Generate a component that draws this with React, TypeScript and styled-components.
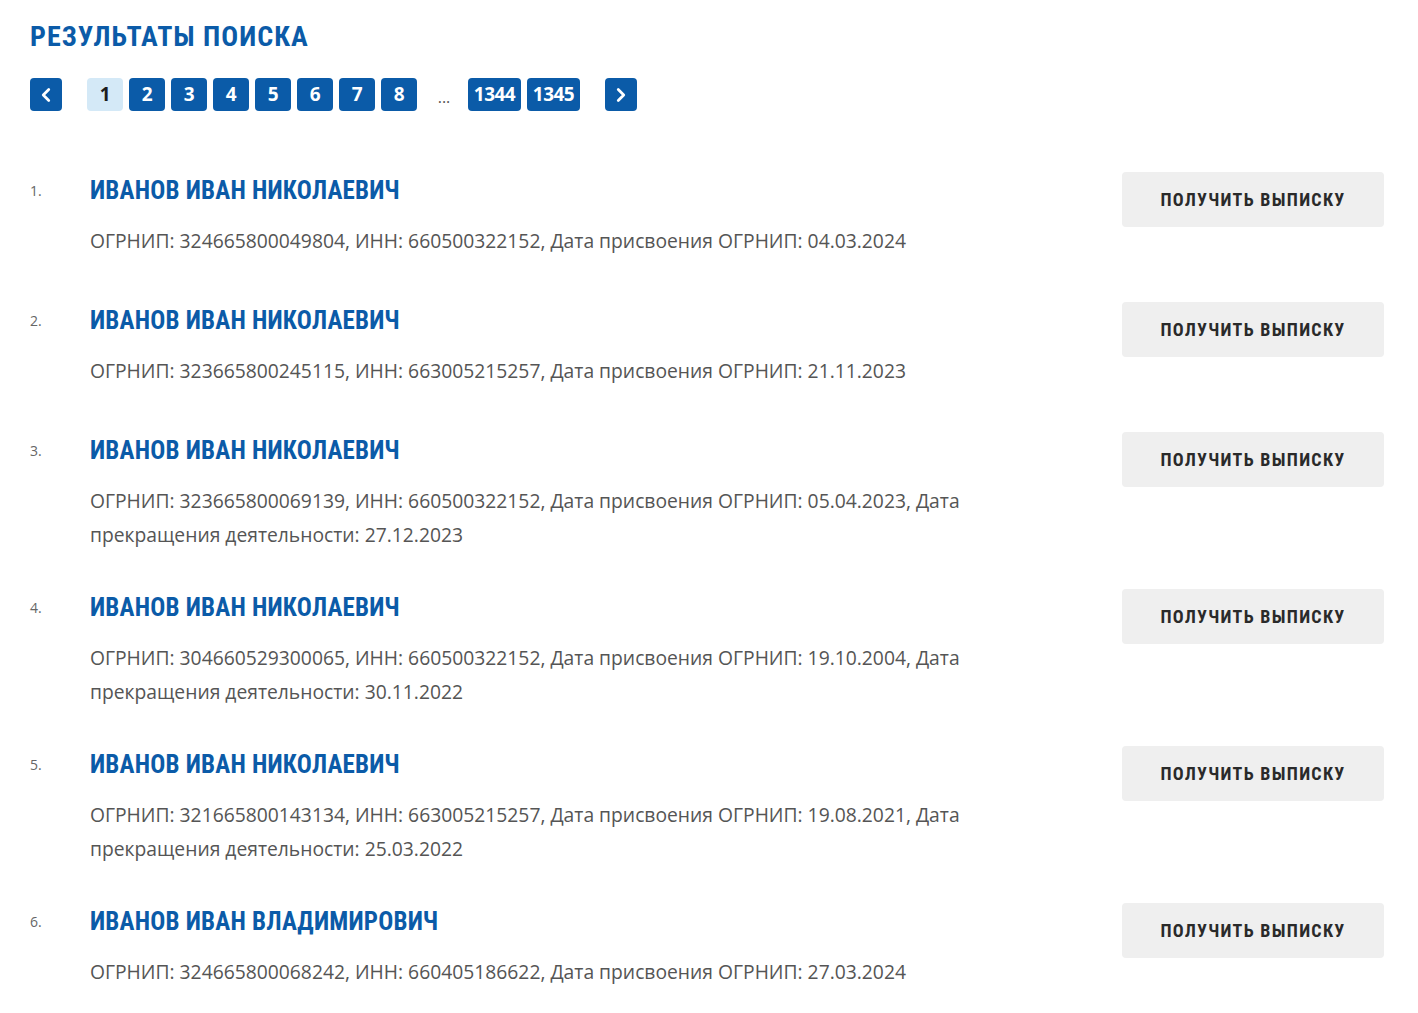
import React from "react";
import styled, { createGlobalStyle } from "styled-components";
import { ChevronLeft, ChevronRight } from "lucide-react";

const Global = createGlobalStyle`
  html, body { margin: 0; padding: 0; background: #fff; }
  body { font-family: "Open Sans", "Noto Sans", sans-serif; }
`;

const BLUE = "#0b5ba8";
const COND = `"Roboto Condensed", "Roboto", sans-serif`;

const Page = styled.div`
  padding: 21px 34px 20px 30px;
`;

const Title = styled.h1`
  margin: 0 0 25px;
  font-family: ${COND};
  font-weight: 700;
  font-size: 28px;
  line-height: 32px;
  color: ${BLUE};
  letter-spacing: 1px;
`;

const Pager = styled.nav`
  display: flex;
  align-items: center;
  gap: 6px;
  margin-bottom: 61px;
`;

const PageBtn = styled.button<{ $active?: boolean; $arrow?: boolean; $wide?: boolean }>`
  box-sizing: border-box;
  display: inline-flex;
  align-items: center;
  justify-content: center;
  height: 33px;
  min-width: ${(p) => (p.$arrow ? "32px" : p.$wide ? "53px" : "36px")};
  padding: 0 0 2px;
  border: none;
  border-radius: 4px;
  background: ${(p) => (p.$active ? "#d4e9f7" : BLUE)};
  color: ${(p) => (p.$active ? "#1d1d1d" : "#fff")};
  font-family: "Open Sans", sans-serif;
  font-weight: 700;
  font-size: 19px;
  letter-spacing: -0.5px;
  cursor: pointer;
`;

const PrevBtn = styled(PageBtn)`
  margin-right: 19px;
  padding: 0;
`;

const NextBtn = styled(PageBtn)`
  margin-left: 19px;
  padding: 0;
`;

const Dots = styled.span`
  width: 36px;
  padding-top: 4px;
  text-align: center;
  color: #555;
  font-size: 16px;
  font-family: "Open Sans", sans-serif;
  margin-left: 3px;
`;

const List = styled.ol`
  list-style: none;
  margin: 0;
  padding: 0;
`;

const Row = styled.li`
  display: flex;
  align-items: flex-start;
  margin-bottom: 37px;
`;

const Num = styled.span`
  width: 60px;
  flex: none;
  margin-top: 4px;
  line-height: 30px;
  font-size: 14px;
  color: #666;
  font-family: "Open Sans", sans-serif;
`;

const Content = styled.div`
  flex: 1;
  max-width: 920px;
  min-height: 93px;
  padding-top: 4px;
  box-sizing: border-box;
`;

const Name = styled.a`
  display: block;
  font-family: ${COND};
  font-weight: 700;
  font-size: 25px;
  line-height: 30px;
  color: ${BLUE};
  text-decoration: none;
  letter-spacing: 0.2px;
`;

const Info = styled.p`
  margin: 18px 0 0;
  font-size: 19.3px;
  line-height: 34px;
  color: #555;
`;

const GetBtn = styled.button`
  margin-left: auto;
  flex: none;
  width: 262px;
  height: 55px;
  border: none;
  border-radius: 4px;
  background: #efefef;
  color: #2a2a2a;
  font-family: ${COND};
  font-weight: 700;
  font-size: 18px;
  letter-spacing: 1.3px;
  cursor: pointer;
`;

const rows = [
  { name: "ИВАНОВ ИВАН НИКОЛАЕВИЧ", info: "ОГРНИП: 324665800049804, ИНН: 660500322152, Дата присвоения ОГРНИП: 04.03.2024" },
  { name: "ИВАНОВ ИВАН НИКОЛАЕВИЧ", info: "ОГРНИП: 323665800245115, ИНН: 663005215257, Дата присвоения ОГРНИП: 21.11.2023" },
  { name: "ИВАНОВ ИВАН НИКОЛАЕВИЧ", info: "ОГРНИП: 323665800069139, ИНН: 660500322152, Дата присвоения ОГРНИП: 05.04.2023, Дата прекращения деятельности: 27.12.2023" },
  { name: "ИВАНОВ ИВАН НИКОЛАЕВИЧ", info: "ОГРНИП: 304660529300065, ИНН: 660500322152, Дата присвоения ОГРНИП: 19.10.2004, Дата прекращения деятельности: 30.11.2022" },
  { name: "ИВАНОВ ИВАН НИКОЛАЕВИЧ", info: "ОГРНИП: 321665800143134, ИНН: 663005215257, Дата присвоения ОГРНИП: 19.08.2021, Дата прекращения деятельности: 25.03.2022" },
  { name: "ИВАНОВ ИВАН ВЛАДИМИРОВИЧ", info: "ОГРНИП: 324665800068242, ИНН: 660405186622, Дата присвоения ОГРНИП: 27.03.2024" },
];

export default function App() {
  return (
    <Page>
      <Global />
      <Title>РЕЗУЛЬТАТЫ ПОИСКА</Title>
      <Pager>
        <PrevBtn $arrow aria-label="Назад">
          <ChevronLeft size={22} strokeWidth={3} />
        </PrevBtn>
        {[1, 2, 3, 4, 5, 6, 7, 8].map((n) => (
          <PageBtn key={n} $active={n === 1}>
            {n}
          </PageBtn>
        ))}
        <Dots>...</Dots>
        <PageBtn $wide>1344</PageBtn>
        <PageBtn $wide>1345</PageBtn>
        <NextBtn $arrow aria-label="Вперёд">
          <ChevronRight size={22} strokeWidth={3} />
        </NextBtn>
      </Pager>
      <List>
        {rows.map((r, i) => (
          <Row key={i}>
            <Num>{i + 1}.</Num>
            <Content>
              <Name href="#">{r.name}</Name>
              <Info>{r.info}</Info>
            </Content>
            <GetBtn>ПОЛУЧИТЬ ВЫПИСКУ</GetBtn>
          </Row>
        ))}
      </List>
    </Page>
  );
}
